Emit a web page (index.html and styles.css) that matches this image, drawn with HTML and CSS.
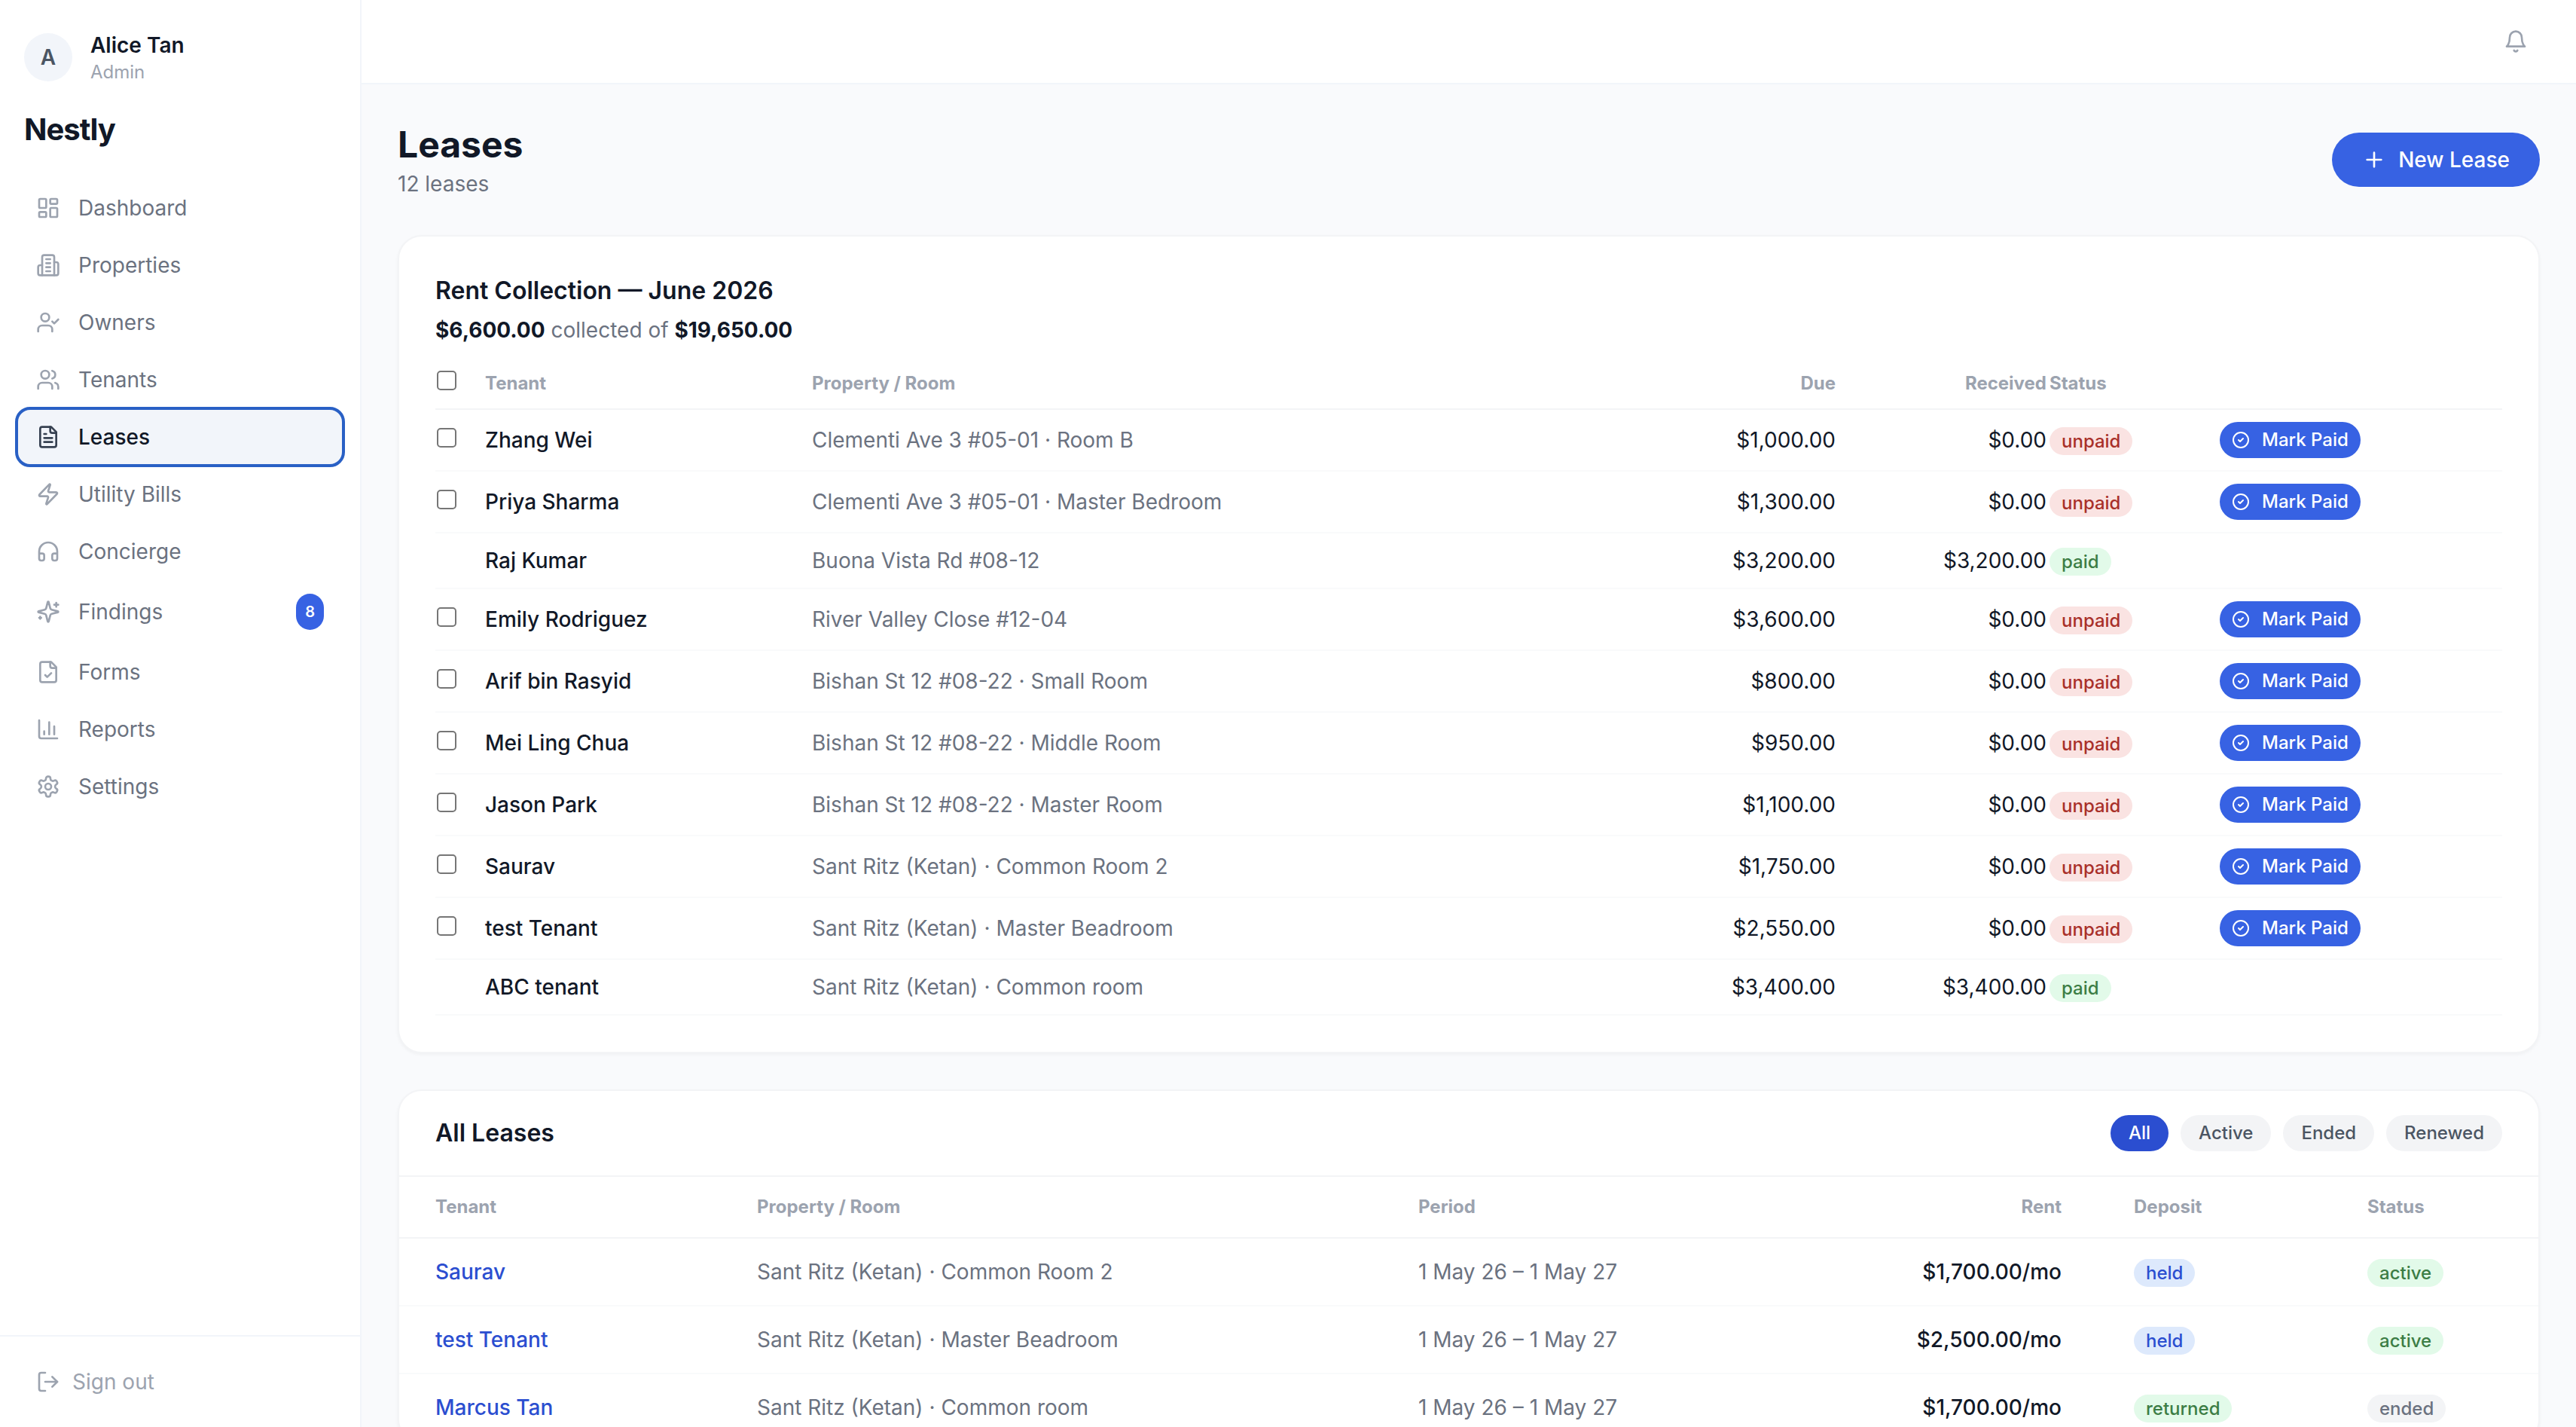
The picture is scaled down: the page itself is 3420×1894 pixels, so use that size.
FILE: index.html
```html
<!DOCTYPE html>
<html lang="en">
<head>
  <meta charset="UTF-8" />
  <meta name="viewport" content="width=device-width, initial-scale=1" />
  <title>Leases - Nestly</title>
  <link rel="stylesheet" href="styles.css">
</head>
<body>

  <!-- Shared icons -->
  <svg class="sprite" aria-hidden="true">
    <symbol id="check-circle" viewBox="0 0 24 24"><circle cx="12" cy="12" r="10"/><path d="m9 12 2 2 4-4"/></symbol>
  </svg>

  <div class="app">
    <aside class="sidebar">
      <div class="profile">
        <div class="avatar">A</div>
        <div>
          <div class="profile-name">Alice Tan</div>
          <div class="profile-role">Admin</div>
        </div>
      </div>
      <div class="brand">Nestly</div>

      <nav class="nav">
        <a class="nav-item">
          <svg class="icon" viewBox="0 0 24 24"><rect width="7" height="9" x="3" y="3" rx="1"/><rect width="7" height="5" x="14" y="3" rx="1"/><rect width="7" height="9" x="14" y="12" rx="1"/><rect width="7" height="5" x="3" y="16" rx="1"/></svg>
          <span>Dashboard</span>
        </a>
        <a class="nav-item">
          <svg class="icon" viewBox="0 0 24 24"><path d="M6 22V4a2 2 0 0 1 2-2h8a2 2 0 0 1 2 2v18Z"/><path d="M6 12H4a2 2 0 0 0-2 2v6a2 2 0 0 0 2 2h2"/><path d="M18 9h2a2 2 0 0 1 2 2v9a2 2 0 0 1-2 2h-2"/><path d="M10 6h4M10 10h4M10 14h4M10 18h4"/></svg>
          <span>Properties</span>
        </a>
        <a class="nav-item">
          <svg class="icon" viewBox="0 0 24 24"><path d="m16 11 2 2 4-4"/><path d="M16 21v-2a4 4 0 0 0-4-4H6a4 4 0 0 0-4 4v2"/><circle cx="9" cy="7" r="4"/></svg>
          <span>Owners</span>
        </a>
        <a class="nav-item">
          <svg class="icon" viewBox="0 0 24 24"><path d="M16 21v-2a4 4 0 0 0-4-4H6a4 4 0 0 0-4 4v2"/><circle cx="9" cy="7" r="4"/><path d="M22 21v-2a4 4 0 0 0-3-3.87"/><path d="M16 3.13a4 4 0 0 1 0 7.75"/></svg>
          <span>Tenants</span>
        </a>
        <a class="nav-item active">
          <svg class="icon" viewBox="0 0 24 24"><path d="M15 2H6a2 2 0 0 0-2 2v16a2 2 0 0 0 2 2h12a2 2 0 0 0 2-2V7Z"/><path d="M14 2v4a2 2 0 0 0 2 2h4"/><path d="M10 9H8M16 13H8M16 17H8"/></svg>
          <span>Leases</span>
        </a>
        <a class="nav-item">
          <svg class="icon" viewBox="0 0 24 24"><path d="M4 14a1 1 0 0 1-.78-1.63l9.9-10.2a.5.5 0 0 1 .86.46l-1.92 6.02A1 1 0 0 0 13 10h7a1 1 0 0 1 .78 1.63l-9.9 10.2a.5.5 0 0 1-.86-.46l1.92-6.02A1 1 0 0 0 11 14z"/></svg>
          <span>Utility Bills</span>
        </a>
        <a class="nav-item">
          <svg class="icon" viewBox="0 0 24 24"><path d="M3 14h3a2 2 0 0 1 2 2v3a2 2 0 0 1-2 2H5a2 2 0 0 1-2-2v-7a9 9 0 0 1 18 0v7a2 2 0 0 1-2 2h-1a2 2 0 0 1-2-2v-3a2 2 0 0 1 2-2h3"/></svg>
          <span>Concierge</span>
        </a>
        <a class="nav-item">
          <svg class="icon" viewBox="0 0 24 24"><path d="M9.937 15.5A2 2 0 0 0 8.5 14.063l-6.135-1.582a.5.5 0 0 1 0-.962L8.5 9.936A2 2 0 0 0 9.937 8.5l1.582-6.135a.5.5 0 0 1 .963 0L14.063 8.5A2 2 0 0 0 15.5 9.937l6.135 1.581a.5.5 0 0 1 0 .964L15.5 14.063a2 2 0 0 0-1.437 1.437l-1.582 6.135a.5.5 0 0 1-.963 0z"/><path d="M20 3v4M22 5h-4M4 17v2M5 18H3"/></svg>
          <span>Findings</span>
          <span class="nav-count">8</span>
        </a>
        <a class="nav-item">
          <svg class="icon" viewBox="0 0 24 24"><path d="M15 2H6a2 2 0 0 0-2 2v16a2 2 0 0 0 2 2h12a2 2 0 0 0 2-2V7Z"/><path d="M14 2v4a2 2 0 0 0 2 2h4"/><path d="m9 15 2 2 4-4"/></svg>
          <span>Forms</span>
        </a>
        <a class="nav-item">
          <svg class="icon" viewBox="0 0 24 24"><path d="M3 3v16a2 2 0 0 0 2 2h16"/><path d="M18 17V9M13 17V5M8 17v-3"/></svg>
          <span>Reports</span>
        </a>
        <a class="nav-item">
          <svg class="icon" viewBox="0 0 24 24"><path d="M12.22 2h-.44a2 2 0 0 0-2 2v.18a2 2 0 0 1-1 1.73l-.43.25a2 2 0 0 1-2 0l-.15-.08a2 2 0 0 0-2.73.73l-.22.38a2 2 0 0 0 .73 2.73l.15.1a2 2 0 0 1 1 1.72v.51a2 2 0 0 1-1 1.74l-.15.09a2 2 0 0 0-.73 2.73l.22.38a2 2 0 0 0 2.73.73l.15-.08a2 2 0 0 1 2 0l.43.25a2 2 0 0 1 1 1.73V20a2 2 0 0 0 2 2h.44a2 2 0 0 0 2-2v-.18a2 2 0 0 1 1-1.73l.43-.25a2 2 0 0 1 2 0l.15.08a2 2 0 0 0 2.73-.73l.22-.39a2 2 0 0 0-.73-2.73l-.15-.08a2 2 0 0 1-1-1.74v-.5a2 2 0 0 1 1-1.74l.15-.09a2 2 0 0 0 .73-2.73l-.22-.38a2 2 0 0 0-2.73-.73l-.15.08a2 2 0 0 1-2 0l-.43-.25a2 2 0 0 1-1-1.73V4a2 2 0 0 0-2-2z"/><circle cx="12" cy="12" r="3"/></svg>
          <span>Settings</span>
        </a>
      </nav>

      <div class="sidebar-footer">
        <a class="sign-out">
          <svg class="icon" viewBox="0 0 24 24"><path d="M9 21H5a2 2 0 0 1-2-2V5a2 2 0 0 1 2-2h4"/><path d="m16 17 5-5-5-5"/><path d="M21 12H9"/></svg>
          <span>Sign out</span>
        </a>
      </div>
    </aside>

    <div class="main">
      <header class="topbar">
        <svg class="icon" viewBox="0 0 24 24"><path d="M6 8a6 6 0 0 1 12 0c0 7 3 9 3 9H3s3-2 3-9"/><path d="M10.3 21a1.94 1.94 0 0 0 3.4 0"/></svg>
      </header>

      <main class="content">
        <div class="page-head">
          <div>
            <h1>Leases</h1>
            <p>12 leases</p>
          </div>
          <button class="btn">
            <svg class="icon" viewBox="0 0 24 24"><path d="M5 12h14M12 5v14"/></svg>
            New Lease
          </button>
        </div>

        <section class="card rent-card">
          <h2>Rent Collection — June 2026</h2>
          <p class="summary"><strong>$6,600.00</strong> collected of <strong>$19,650.00</strong></p>

          <table class="rent-table">
            <colgroup>
              <col class="col-check"><col class="col-tenant"><col class="col-room"><col class="col-money"><col class="col-money"><col class="col-status"><col>
            </colgroup>
            <thead>
              <tr><th><input type="checkbox"></th><th>Tenant</th><th>Property / Room</th><th class="right">Due</th><th class="right">Received</th><th>Status</th><th></th></tr>
            </thead>
            <tbody>
              <tr><td><input type="checkbox"></td><td class="name">Zhang Wei</td><td class="room">Clementi Ave 3 #05-01 · Room B</td><td class="right">$1,000.00</td><td class="right">$0.00</td><td><span class="badge red">unpaid</span></td><td><button class="btn btn-sm"><svg class="icon"><use href="#check-circle"/></svg>Mark Paid</button></td></tr>
              <tr><td><input type="checkbox"></td><td class="name">Priya Sharma</td><td class="room">Clementi Ave 3 #05-01 · Master Bedroom</td><td class="right">$1,300.00</td><td class="right">$0.00</td><td><span class="badge red">unpaid</span></td><td><button class="btn btn-sm"><svg class="icon"><use href="#check-circle"/></svg>Mark Paid</button></td></tr>
              <tr><td></td><td class="name">Raj Kumar</td><td class="room">Buona Vista Rd #08-12</td><td class="right">$3,200.00</td><td class="right">$3,200.00</td><td><span class="badge green">paid</span></td><td></td></tr>
              <tr><td><input type="checkbox"></td><td class="name">Emily Rodriguez</td><td class="room">River Valley Close #12-04</td><td class="right">$3,600.00</td><td class="right">$0.00</td><td><span class="badge red">unpaid</span></td><td><button class="btn btn-sm"><svg class="icon"><use href="#check-circle"/></svg>Mark Paid</button></td></tr>
              <tr><td><input type="checkbox"></td><td class="name">Arif bin Rasyid</td><td class="room">Bishan St 12 #08-22 · Small Room</td><td class="right">$800.00</td><td class="right">$0.00</td><td><span class="badge red">unpaid</span></td><td><button class="btn btn-sm"><svg class="icon"><use href="#check-circle"/></svg>Mark Paid</button></td></tr>
              <tr><td><input type="checkbox"></td><td class="name">Mei Ling Chua</td><td class="room">Bishan St 12 #08-22 · Middle Room</td><td class="right">$950.00</td><td class="right">$0.00</td><td><span class="badge red">unpaid</span></td><td><button class="btn btn-sm"><svg class="icon"><use href="#check-circle"/></svg>Mark Paid</button></td></tr>
              <tr><td><input type="checkbox"></td><td class="name">Jason Park</td><td class="room">Bishan St 12 #08-22 · Master Room</td><td class="right">$1,100.00</td><td class="right">$0.00</td><td><span class="badge red">unpaid</span></td><td><button class="btn btn-sm"><svg class="icon"><use href="#check-circle"/></svg>Mark Paid</button></td></tr>
              <tr><td><input type="checkbox"></td><td class="name">Saurav</td><td class="room">Sant Ritz (Ketan) · Common Room 2</td><td class="right">$1,750.00</td><td class="right">$0.00</td><td><span class="badge red">unpaid</span></td><td><button class="btn btn-sm"><svg class="icon"><use href="#check-circle"/></svg>Mark Paid</button></td></tr>
              <tr><td><input type="checkbox"></td><td class="name">test Tenant</td><td class="room">Sant Ritz (Ketan) · Master Beadroom</td><td class="right">$2,550.00</td><td class="right">$0.00</td><td><span class="badge red">unpaid</span></td><td><button class="btn btn-sm"><svg class="icon"><use href="#check-circle"/></svg>Mark Paid</button></td></tr>
              <tr><td></td><td class="name">ABC tenant</td><td class="room">Sant Ritz (Ketan) · Common room</td><td class="right">$3,400.00</td><td class="right">$3,400.00</td><td><span class="badge green">paid</span></td><td></td></tr>
            </tbody>
          </table>
        </section>

        <section class="card">
          <div class="card-head">
            <h2>All Leases</h2>
            <div class="filters">
              <button class="pill selected">All</button>
              <button class="pill">Active</button>
              <button class="pill">Ended</button>
              <button class="pill">Renewed</button>
            </div>
          </div>

          <table class="lease-table">
            <colgroup>
              <col class="col-tenant"><col class="col-room"><col class="col-period"><col class="col-rent"><col class="col-deposit"><col>
            </colgroup>
            <thead>
              <tr><th>Tenant</th><th>Property / Room</th><th>Period</th><th class="right">Rent</th><th>Deposit</th><th>Status</th></tr>
            </thead>
            <tbody>
              <tr><td class="link">Saurav</td><td class="room">Sant Ritz (Ketan) · Common Room 2</td><td class="room">1 May 26 – 1 May 27</td><td class="right name">$1,700.00/mo</td><td><span class="badge blue">held</span></td><td><span class="badge green">active</span></td></tr>
              <tr><td class="link">test Tenant</td><td class="room">Sant Ritz (Ketan) · Master Beadroom</td><td class="room">1 May 26 – 1 May 27</td><td class="right name">$2,500.00/mo</td><td><span class="badge blue">held</span></td><td><span class="badge green">active</span></td></tr>
              <tr><td class="link">Marcus Tan</td><td class="room">Sant Ritz (Ketan) · Common room</td><td class="room">1 May 26 – 1 May 27</td><td class="right name">$1,700.00/mo</td><td><span class="badge green">returned</span></td><td><span class="badge gray">ended</span></td></tr>
            </tbody>
          </table>
        </section>
      </main>
    </div>
  </div>

</body>
</html>
```
FILE: styles.css
```css
/* Reset & basics */
* {
  box-sizing: border-box;
  margin: 0;
  padding: 0;
}
body {
  font-family: Inter, 'Liberation Sans', sans-serif;
  font-size: 28px;
  line-height: 40px;
  color: #111827;
  background: #f9fafc;
  -webkit-font-smoothing: antialiased;
}
.sprite {
  display: none;
}
.icon {
  width: 32px;
  height: 32px;
  flex-shrink: 0;
  fill: none;
  stroke: currentColor;
  stroke-width: 2;
  stroke-linecap: round;
  stroke-linejoin: round;
}
.app {
  display: flex;
  height: 100vh;
  overflow: hidden;
}

/* Sidebar */
.sidebar {
  width: 480px;
  flex-shrink: 0;
  display: flex;
  flex-direction: column;
  background: #fff;
  border-right: 2px solid #f2f5fa;
}
.profile {
  display: flex;
  align-items: center;
  gap: 24px;
  padding: 40px 32px 0;
}
.avatar {
  width: 64px;
  height: 64px;
  border-radius: 50%;
  background: #f2f5fa;
  color: #4b5563;
  font-weight: 600;
  text-align: center;
  line-height: 64px;
}
.profile-name {
  font-weight: 600;
}
.profile-role {
  font-size: 24px;
  line-height: 32px;
  color: #9ca3af;
}
.brand {
  padding: 32px 32px 0;
  font-size: 40px;
  line-height: 56px;
  font-weight: 700;
  letter-spacing: -1px;
}
.nav {
  flex: 1;
  display: flex;
  flex-direction: column;
  gap: 4px;
  padding: 40px 24px 0;
}
.nav-item {
  display: flex;
  align-items: center;
  gap: 24px;
  padding: 16px 24px;
  border-radius: 16px;
  color: #6b7280;
}
.nav-item .icon {
  color: #9ca3af;
}
.nav-item.active {
  background: #f2f5fa;
  color: #111827;
  font-weight: 500;
  outline: 4px solid #2960c5;
}
.nav-item.active .icon {
  color: #374151;
}
.nav-count {
  margin-left: auto;
  padding: 8px 12px;
  border-radius: 24px;
  background: #3762e3;
  color: #fff;
  font-size: 20px;
  line-height: 32px;
  font-weight: 600;
}
.sidebar-footer {
  padding: 24px;
  border-top: 2px solid #f2f5fa;
}
.sign-out {
  display: flex;
  align-items: center;
  gap: 16px;
  padding: 16px 24px;
  color: #9ca3af;
}

/* Main area */
.main {
  flex: 1;
  min-width: 0;
}
.topbar {
  display: flex;
  align-items: center;
  justify-content: flex-end;
  height: 112px;
  padding: 0 64px;
  background: #fff;
  border-bottom: 2px solid #f2f5fa;
  color: #9ca3af;
}
.content {
  padding: 48px;
}
.page-head {
  display: flex;
  align-items: center;
  justify-content: space-between;
  margin-bottom: 48px;
}
h1 {
  font-size: 48px;
  line-height: 64px;
  font-weight: 700;
}
h2 {
  font-size: 32px;
  line-height: 48px;
  font-weight: 600;
}
.page-head p {
  color: #6b7280;
}

/* Buttons */
.btn {
  display: inline-flex;
  align-items: center;
  gap: 16px;
  padding: 16px 40px;
  border: none;
  border-radius: 36px;
  background: #3762e3;
  color: #fff;
  font: inherit;
  font-weight: 500;
}
.btn-sm {
  display: flex;
  padding: 8px 16px;
  border-radius: 24px;
  font-size: 24px;
  line-height: 32px;
}
.btn-sm .icon {
  width: 24px;
  height: 24px;
}
.filters {
  display: flex;
  gap: 16px;
}
.pill {
  padding: 8px 24px;
  border: none;
  border-radius: 24px;
  background: #f3f4f6;
  color: #4b5563;
  font: 500 24px/32px Inter, sans-serif;
}
.pill.selected {
  background: #2b4ed0;
  color: #fff;
}

/* Cards */
.card {
  margin-bottom: 48px;
  background: #fff;
  border: 2px solid #f3f4f6;
  border-radius: 32px;
  box-shadow: 0 2px 4px rgba(0, 0, 0, 0.04);
}
.rent-card {
  padding: 48px;
}
.summary {
  margin: 8px 0 16px;
  color: #6b7280;
}
.summary strong {
  font-weight: 700;
  color: #111827;
}
.card-head {
  display: flex;
  align-items: center;
  justify-content: space-between;
  padding: 32px 48px;
  border-bottom: 2px solid #f3f4f6;
}

/* Tables */
table {
  width: 100%;
  table-layout: fixed;
  border-collapse: separate;
  border-spacing: 0;
}
th {
  font-size: 24px;
  line-height: 32px;
  font-weight: 700;
  text-align: left;
  color: #9ca3af;
  border-bottom: 2px solid #f3f4f6;
}
td {
  border-bottom: 2px solid #f9fafb;
}
th, td {
  vertical-align: middle;
  white-space: nowrap;
}
.right {
  text-align: right;
}
.name {
  font-weight: 500;
}
.room {
  color: #6b7280;
}
.link {
  font-weight: 500;
  color: #2b4ed0;
}

.rent-table th {
  height: 70px;
  padding: 2px 2px 0;
}
.rent-table td {
  padding: 16px 2px;
}
.rent-table .col-check { width: 64px; }
.rent-table .col-tenant { width: 434px; }
.rent-table .col-room { width: 1083px; }
.rent-table .col-money { width: 280px; }
.rent-table .col-status { width: 226px; }

.lease-table th, .lease-table td {
  padding: 24px 48px;
}
.lease-table .col-tenant { width: 427px; }
.lease-table .col-room { width: 878px; }
.lease-table .col-period { width: 500px; }
.lease-table .col-rent { width: 450px; }
.lease-table .col-deposit { width: 310px; }

input[type="checkbox"] {
  appearance: none;
  display: block;
  width: 26px;
  height: 26px;
  margin-bottom: 6px;
  background: #fff;
  border: 2px solid #767676;
  border-radius: 5px;
}
th input[type="checkbox"] {
  margin-bottom: 8px;
}

/* Badges */
.badge {
  display: block;
  width: fit-content;
  margin: 3px 0 0;
  padding: 4px 16px;
  border-radius: 19px;
  font-size: 24px;
  line-height: 29px;
  font-weight: 500;
}
.badge.red {
  background: #fae3e2;
  color: #a9302a;
}
.badge.green {
  background: #e2fae9;
  color: #3c7d45;
}
.badge.blue {
  background: #dde9fc;
  color: #2b4ed0;
}
.badge.gray {
  background: #f3f4f6;
  color: #6b7280;
}
```
